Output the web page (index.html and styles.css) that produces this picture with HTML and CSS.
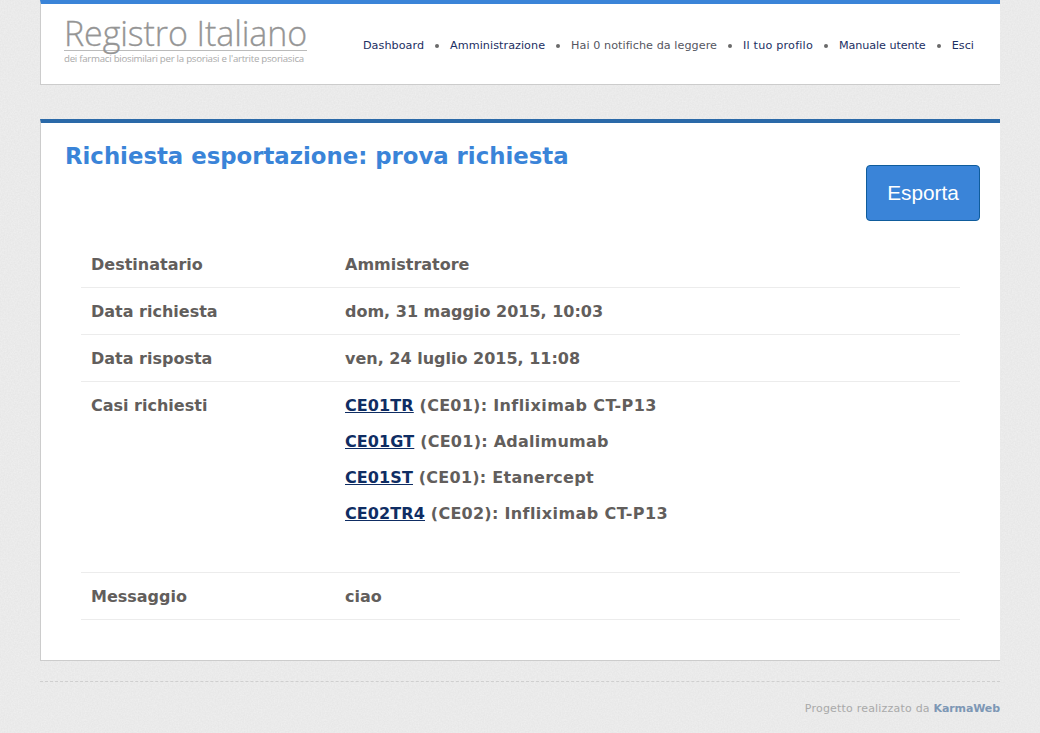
FILE: index.html
```html
<!DOCTYPE html>
<html lang="it">
<head>
<meta charset="utf-8">
<title>Registro Italiano</title>
<link rel="stylesheet" href="styles.css">
</head>
<body>
<div class="page">
  <header class="header">
    <a class="logo" href="#">
      <span class="logo-title">Registro Italiano</span>
      <span class="logo-sub">dei farmaci biosimilari per la psoriasi e l'artrite psoriasica</span>
    </a>
    <nav class="nav">
      <a href="#">Dashboard</a><i class="dot"></i>
      <a href="#">Amministrazione</a><i class="dot"></i>
      <a href="#" class="nav-muted">Hai 0 notifiche da leggere</a><i class="dot"></i>
      <a href="#" class="nav-wide">Il tuo profilo</a><i class="dot"></i>
      <a href="#" class="nav-tight">Manuale utente</a><i class="dot"></i>
      <a href="#">Esci</a>
    </nav>
  </header>
  <main class="panel">
    <div class="panel-head">
      <h1 class="title">Richiesta esportazione: prova richiesta</h1>
      <a class="btn" href="#">Esporta</a>
    </div>
    <table class="details">
      <tr><th>Destinatario</th><td>Ammistratore</td></tr>
      <tr><th>Data richiesta</th><td>dom, 31 maggio 2015, 10:03</td></tr>
      <tr><th>Data risposta</th><td>ven, 24 luglio 2015, 11:08</td></tr>
      <tr class="cases"><th>Casi richiesti</th><td>
        <p><a href="#">CE01TR</a> (CE01): <span class="drug">Infliximab CT-P13</span></p>
        <p><a href="#">CE01GT</a> (CE01): Adalimumab</p>
        <p><a href="#">CE01ST</a> (CE01): Etanercept</p>
        <p><a href="#">CE02TR4</a> (CE02): <span class="drug">Infliximab CT-P13</span></p>
      </td></tr>
      <tr><th>Messaggio</th><td>ciao</td></tr>
    </table>
  </main>
  <footer class="footer">Progetto realizzato da <a href="#">KarmaWeb</a></footer>
</div>
</body>
</html>
```
FILE: styles.css
```css
* { box-sizing: border-box; }
html, body { margin: 0; height: 100%; }
body {
  background-color: #e7e7e7;
  background-image: url("data:image/svg+xml,%3Csvg xmlns='http://www.w3.org/2000/svg' width='240' height='240'%3E%3Cfilter id='n'%3E%3CfeTurbulence type='fractalNoise' baseFrequency='0.7' numOctaves='2' stitchTiles='stitch'/%3E%3CfeColorMatrix values='0 0 0 0 1 0 0 0 0 1 0 0 0 0 1 0 0 0 0.5 -0.12'/%3E%3C/filter%3E%3Crect width='240' height='240' filter='url(%23n)'/%3E%3C/svg%3E");
  font-family: "DejaVu Sans", Verdana, sans-serif;
  font-variant-ligatures: none;
  color: #625e5c;
  overflow: hidden;
}
.page { margin: 0 40px; }
.header {
  height: 85px;
  background: #fff;
  border-top: 4px solid #3a84d8;
  border-left: 1px solid #ccc;
  border-bottom: 1px solid #ccc;
  display: flex;
  justify-content: space-between;
  align-items: flex-start;
  padding: 0 26px 0 23px;
}
.logo {
  display: flex;
  flex-direction: column;
  width: 243px;
  margin-top: 13px;
  text-decoration: none;
  color: #959595;
}
.logo-title {
  font-family: "Open Sans", sans-serif;
  font-weight: 300;
  font-size: 34px;
  line-height: 33px;
  letter-spacing: -0.1px;
  -webkit-text-stroke: 0.3px #959595;
  border-bottom: 1px solid #bbb;
  white-space: nowrap;
}
.logo-sub {
  font-family: "Open Sans", sans-serif;
  font-size: 9.7px;
  line-height: 15px;
  letter-spacing: -0.27px;
  color: #aaa;
  white-space: nowrap;
}
.nav {
  display: flex;
  align-items: center;
  gap: 11px;
  margin-top: 34px;
  font-size: 11.2px;
  letter-spacing: 0.05px;
  line-height: 16px;
}
.nav a { color: #1c2f63; text-decoration: none; white-space: nowrap; }
.nav .nav-muted { color: #55565f; }
.nav .nav-wide { letter-spacing: 0.2px; }
.nav .nav-tight { letter-spacing: -0.08px; }
.dot { width: 4px; height: 4px; border-radius: 50%; background: #6a6a6a; }
.panel {
  margin-top: 34px;
  height: 542px;
  background: #fff;
  border-top: 4px solid #2a69a8;
  border-left: 1px solid #ccc;
  border-bottom: 1px solid #ccc;
  padding: 0 40px 0 24px;
}
.panel-head { display: flex; justify-content: space-between; align-items: flex-start; height: 118px; }
.title {
  margin: 19px 0 0;
  font-size: 22.8px;
  line-height: 28px;
  font-weight: 700;
  color: #3a84d8;
}
.btn {
  margin: 42px -20px 0 0;
  width: 114px;
  height: 56px;
  border: 1px solid #0f5c9c;
  border-radius: 4px;
  background: #3a84d8;
  color: #fff;
  font-family: "Liberation Sans", Arial, sans-serif;
  font-size: 20.8px;
  line-height: 54px;
  text-align: center;
  text-decoration: none;
}
.details {
  margin-left: 16px;
  width: 879px;
  border-collapse: separate;
  border-spacing: 0;
  font-size: 16px;
  line-height: 26px;
}
.details th, .details td {
  padding: 11px 10px 9px;
  height: 47px;
  text-align: left;
  vertical-align: top;
  font-weight: 700;
  border-bottom: 1px solid #ececec;
}
.details th { width: 254px; }
.details p { margin: 0 0 10px; letter-spacing: 0.25px; }
.details .drug { letter-spacing: 0.42px; }
.cases td { height: 191px; padding-bottom: 35px; }
.details a { color: #0f2d63; letter-spacing: 0.1px; }
.footer {
  margin-top: 20px;
  height: 50px;
  border-top: 1px dashed #cfcfcf;
  padding-top: 19px;
  text-align: right;
  font-size: 11px;
  letter-spacing: 0.2px;
  line-height: 16px;
  color: #a9a9a9;
}
.footer a { color: #7d97b5; font-weight: 700; letter-spacing: -0.1px; text-decoration: none; }
```
